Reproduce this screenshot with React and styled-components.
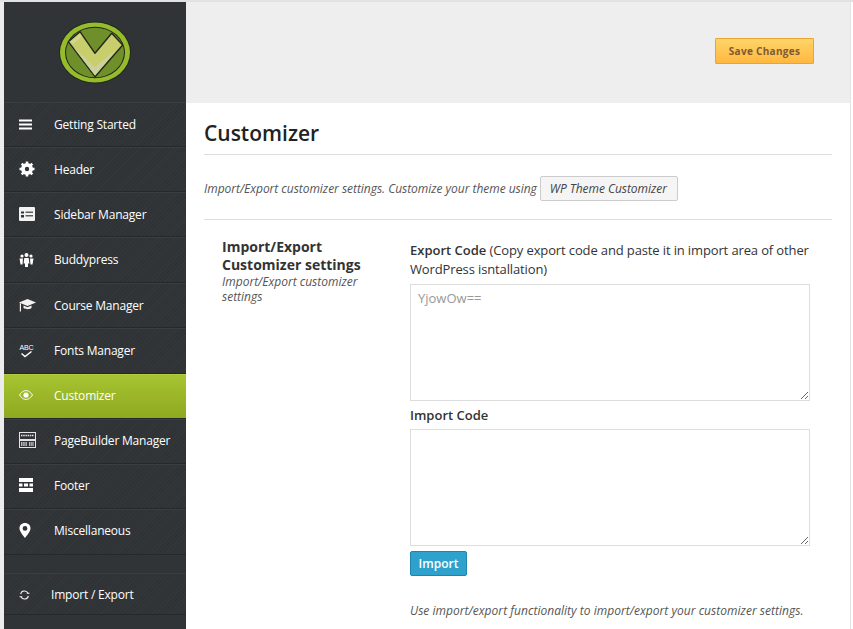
import styled, { createGlobalStyle } from 'styled-components';

const GlobalStyle = createGlobalStyle`
  html, body {
    margin: 0;
    padding: 0;
    background: #fff;
    overflow: hidden;
  }
  * { box-sizing: border-box; }
`;

const Page = styled.div`
  width: 853px;
  height: 629px;
  display: flex;
  overflow: hidden;
  padding: 2px 3px 0 4px;
  background: #fff;
  font-family: "Open Sans", sans-serif;
  color: #333;
  position: relative;
  &::before { content: ''; position: absolute; left: 0; right: 0; top: 0; height: 2px; background: #e2e2e2; }
  &::after { content: ''; position: absolute; right: 2px; top: 0; bottom: 0; width: 1px; background: #e2e2e2; }
`;

const Sidebar = styled.aside`
  width: 182px;
  flex-shrink: 0;
  background: #303437;
  display: flex;
  flex-direction: column;
  box-shadow: -4px 0 0 #ececec;
`;

const LogoBox = styled.div`
  height: 100px;
  display: flex;
  align-items: center;
  justify-content: center;
  padding-right: 1px;
`;

const Nav = styled.nav`
  display: flex;
  flex-direction: column;
`;

const Item = styled.a`
  height: ${p => p.$h || 45}px;
  display: flex;
  align-items: center;
  padding-left: ${p => p.$pad || 14}px;
  padding-top: ${p => p.$pt || 0}px;
  padding-bottom: ${p => p.$pb ?? 1}px;
  font-size: 12px;
  letter-spacing: -0.2px;
  color: #fff;
  border-top: 1px solid ${p => p.$active ? '#b3cc3f' : '#3a3e41'};
  border-bottom: 1px solid #26292b;
  background: ${p => p.$active
    ? 'linear-gradient(#a6c431, #8fa920)'
    : 'repeating-linear-gradient(135deg, #33373a 0 1px, #2f3336 1px 3px)'};
`;

const IconSlot = styled.span`
  width: ${p => p.$w || 36}px;
  flex-shrink: 0;
  display: flex;
  align-items: center;
  padding-left: ${p => p.$off || 0}px;
  color: #fff;
`;

const Gap = styled.div`
  height: 18px;
`;

const Main = styled.main`
  flex: 1;
  display: flex;
  flex-direction: column;
  min-width: 0;
`;

const TopBar = styled.header`
  height: 101px;
  background: #eeeeee;
  display: flex;
  justify-content: flex-end;
  align-items: center;
  padding: 0 36px 0 0;
`;

const SaveButton = styled.button`
  width: 99px;
  height: 26px;
  margin-bottom: 3px;
  padding: 0;
  border: 1px solid #e9a52f;
  border-radius: 1px;
  background: linear-gradient(#ffd468, #ffb840);
  color: #7d5a33;
  font: 700 10px "Open Sans", sans-serif;
  letter-spacing: 0.3px;
`;

const Content = styled.div`
  padding: 17px 18px 0 18px;
`;

const Title = styled.h1`
  margin: 0;
  height: 35px;
  border-bottom: 1px solid #ddd;
  font-size: 21px;
  line-height: 27px;
  font-weight: 600;
  color: #222;
`;

const IntroRow = styled.div`
  height: 65px;
  border-bottom: 1px solid #ddd;
  display: flex;
  align-items: center;
  gap: 3px;
  padding-top: 3px;
`;

const Note = styled.em`
  font-size: 12px;
  letter-spacing: -0.03px;
  color: #555;
`;

const ThemeLink = styled.a`
  height: 25px;
  padding: 0 10px 0 9px;
  display: flex;
  align-items: center;
  border: 1px solid #ccc;
  border-radius: 2px;
  background: #f5f5f5;
  font-size: 12px;
  font-style: italic;
  letter-spacing: -0.05px;
  color: #444;
`;

const Section = styled.section`
  display: flex;
  padding: 18px 0 0 18px;
`;

const SectionInfo = styled.div`
  width: 188px;
  padding-right: 40px;
  flex-shrink: 0;
`;

const SectionTitle = styled.h3`
  margin: 0;
  font-size: 14px;
  line-height: 18px;
  font-weight: 700;
  color: #333;
`;

const SectionNote = styled.em`
  display: block;
  font-size: 12px;
  line-height: 15px;
  color: #555;
`;

const Fields = styled.div`
  width: 400px;
  display: flex;
  flex-direction: column;
`;

const FieldLabel = styled.label`
  font-size: 13px;
  line-height: 19px;
  letter-spacing: -0.13px;
  color: #333;
  margin-top: ${p => p.$top}px;
  margin-bottom: ${p => p.$bottom}px;
  b { font-weight: 600; letter-spacing: 0; }
`;

const CodeBox = styled.textarea`
  display: block;
  width: 400px;
  height: 117px;
  padding: 4px 7px;
  border: 1px solid #ddd;
  border-radius: 0;
  outline: 0;
  font: 13px "Open Sans", sans-serif;
  color: #999;
  background: #fff;
`;

const ImportButton = styled.button`
  align-self: flex-start;
  width: 57px;
  height: 25px;
  margin-top: 5px;
  padding: 0;
  border: 1px solid #1f85ad;
  border-radius: 2px;
  background: #2ea2cc;
  color: #fff;
  font: 600 12px "Open Sans", sans-serif;
`;

const UsageNote = styled.em`
  margin-top: 26px;
  font-size: 12px;
  letter-spacing: 0.03px;
  color: #555;
`;

const FontStack = styled.span`
  width: 15px;
  display: flex;
  flex-direction: column;
  align-items: center;
`;

const AbcText = styled.span`
  font: 7px/7px "Liberation Sans", sans-serif;
  color: #fff;
`;

const Logo = () => (
  <svg width="74" height="63" viewBox="0 0 74 63">
    <ellipse cx="37" cy="31.500" rx="36" ry="31" fill="#23261f" />
    <ellipse cx="37" cy="31.500" rx="35" ry="30" fill="#97bc2b" />
    <ellipse cx="37" cy="31.500" rx="30" ry="25.800" fill="#23261f" />
    <ellipse cx="37" cy="31.500" rx="29" ry="24.800" fill="#6f8f2a" />
    <path d="M10.300 20.700L22 10.700 37 32.300 53.700 12.300 64.700 24 37 55.700z" fill="#c9ce6c" stroke="#23261f" strokeWidth="1.400" strokeLinejoin="round" />
    <path d="M16 27L37 46 59 28 37 54.500z" fill="#ccd29c" />
    <path d="M12.500 20.800L22 12.700 24 15.500 15 23z" fill="#d3d68e" />
  </svg>
);

const Bars = () => (
  <svg width="14" height="11" viewBox="0 0 14 11" fill="#fff">
    <rect y="0.500" width="13" height="2" /><rect y="4.500" width="13" height="2" /><rect y="8.500" width="13" height="2" />
  </svg>
);

const Gear = () => (
  <svg width="16" height="16" viewBox="0 0 16 16">
    <circle cx="8" cy="8" r="4.500" fill="none" stroke="#fff" strokeWidth="3" />
    <path d="M8 .500v15M.500 8h15M2.700 2.700l10.600 10.600M13.300 2.700L2.700 13.300" stroke="#fff" strokeWidth="2.600" />
    <circle cx="8" cy="8" r="2.200" fill="#303437" />
  </svg>
);

const SidebarIcon = () => (
  <svg width="16" height="14" viewBox="0 0 16 14">
    <rect width="16" height="14" rx="1" fill="#f2f2f2" />
    <path d="M2 4.500h3v2H2zM2 8h3v2.500H2z" fill="#303437" />
    <path d="M6.500 4.500h7.500v1.500H6.500zM6.500 8H14v1.500H6.500z" fill="#5a5e60" />
  </svg>
);

const People = () => (
  <svg width="15" height="14" viewBox="0 0 15 14" fill="#fff">
    <circle cx="7.500" cy="2" r="2" /><circle cx="3" cy="3" r="1.600" /><circle cx="12" cy="3" r="1.600" />
    <path d="M5.300 5h4.400l.700 5.500H9V14H6v-3.500H4.600zM.500 5.500h3.500L3.500 11.500H1.500zM11 5.500h3.500L13.500 11.500H11.500z" />
  </svg>
);

const Cap = () => (
  <svg width="17" height="14" viewBox="0 0 17 14" fill="#f2f2f2">
    <path d="M0 4.500L8.500 1 17 4.500 8.500 8z" />
    <path d="M4.500 7.500L8.500 9.200 12.500 7.500V10C10.500 11.600 6.500 11.600 4.500 10z" />
    <path d="M.800 5.200h1.200v8.300H.800z" />
  </svg>
);

const FontCheck = () => (
  <FontStack>
    <AbcText>ABC</AbcText>
    <svg width="13" height="7" viewBox="0 0 13 7"><path d="M1.500 2.500l3.500 3 6.500-5" fill="none" stroke="#fff" strokeWidth="1.400" /></svg>
  </FontStack>
);

const Eye = () => (
  <svg width="14" height="10" viewBox="0 0 14 10">
    <path d="M.500 5C3 1.400 5 .600 7 .600S11 1.400 13.500 5C11 8.600 9 9.400 7 9.400S3 8.600 .500 5z" fill="none" stroke="#fff" />
    <circle cx="7" cy="5" r="2.600" fill="#fff" />
  </svg>
);

const Builder = () => (
  <svg width="17" height="16" viewBox="0 0 17 16">
    <rect x=".500" y=".500" width="16" height="7" fill="none" stroke="#e4e4e4" />
    <rect x=".500" y="8.500" width="16" height="7" fill="none" stroke="#e4e4e4" />
    <path d="M2 3.500h13M2 11h6M10 11h5M2 13h6M10 13h5" stroke="#e4e4e4" strokeWidth="1.500" strokeDasharray="1.500 .7" />
  </svg>
);

const FooterIcon = () => (
  <svg width="14" height="14" viewBox="0 0 14 14" fill="#fff">
    <rect width="14" height="4" />
    <rect y="10" width="14" height="4" />
    <path d="M0 5.500h3.500v3H0zM5 5.500h4v3H5zM10.500 5.500H14v3h-3.500z" />
  </svg>
);

const Pin = () => (
  <svg width="12" height="15" viewBox="0 0 12 15">
    <path fillRule="evenodd" fill="#fff" d="M6 0c3.300 0 5.500 2.400 5.500 5.300C11.500 8.500 8 12.500 6 15 4 12.500.500 8.500.500 5.300.500 2.400 2.700 0 6 0zm0 3a2.400 2.400 0 1 0 0 4.800A2.400 2.400 0 0 0 6 3z" />
  </svg>
);

const Sync = () => (
  <svg width="11" height="10" viewBox="0 0 12 11" fill="none" stroke="#eee" strokeWidth="1.200">
    <path d="M1.800 4.500a4.200 4 0 0 1 8-1M10.200 6.500a4.200 4 0 0 1-8 1" />
    <path d="M11.500 3.500H8.500M.500 7.500h3" />
  </svg>
);

const items = [
  ['Getting Started', <Bars />, 45, 1],
  ['Header', <Gear />, 45, 1],
  ['Sidebar Manager', <SidebarIcon />, 45, 1],
  ['Buddypress', <People />, 46, 1],
  ['Course Manager', <Cap />, 45, 1],
  ['Fonts Manager', <FontCheck />, 46, 1],
  ['Customizer', <Eye />, 45, 3, true],
  ['PageBuilder Manager', <Builder />, 45, 3],
  ['Footer', <FooterIcon />, 45, 3],
  ['Miscellaneous', <Pin />, 46, 3],
];

export default function App() {
  return (
    <Page>
      <GlobalStyle />
      <Sidebar>
        <LogoBox><Logo /></LogoBox>
        <Nav>
          {items.map(([label, icon, height, bottom, active]) => (
            <Item key={label} $h={height} $pb={bottom} $active={active}>
              <IconSlot $off={1}>{icon}</IconSlot>
              {label}
            </Item>
          ))}
        </Nav>
        <Gap />
        <Item $h={42} $pad={15} $pt={1} $pb={0}>
          <IconSlot $w={32}><Sync /></IconSlot>
          Import / Export
        </Item>
      </Sidebar>
      <Main>
        <TopBar><SaveButton>Save Changes</SaveButton></TopBar>
        <Content>
          <Title>Customizer</Title>
          <IntroRow>
            <Note>Import/Export customizer settings. Customize your theme using</Note>
            <ThemeLink>WP Theme Customizer</ThemeLink>
          </IntroRow>
          <Section>
            <SectionInfo>
              <SectionTitle>Import/Export Customizer settings</SectionTitle>
              <SectionNote>Import/Export customizer settings</SectionNote>
            </SectionInfo>
            <Fields>
              <FieldLabel $top={3} $bottom={5}><b>Export Code</b> (Copy export code and paste it in import area of other WordPress isntallation)</FieldLabel>
              <CodeBox readOnly value="YjowOw==" />
              <FieldLabel $top={5} $bottom={4}><b>Import Code</b></FieldLabel>
              <CodeBox />
              <ImportButton>Import</ImportButton>
              <UsageNote>Use import/export functionality to import/export your customizer settings.</UsageNote>
            </Fields>
          </Section>
        </Content>
      </Main>
    </Page>
  );
}
